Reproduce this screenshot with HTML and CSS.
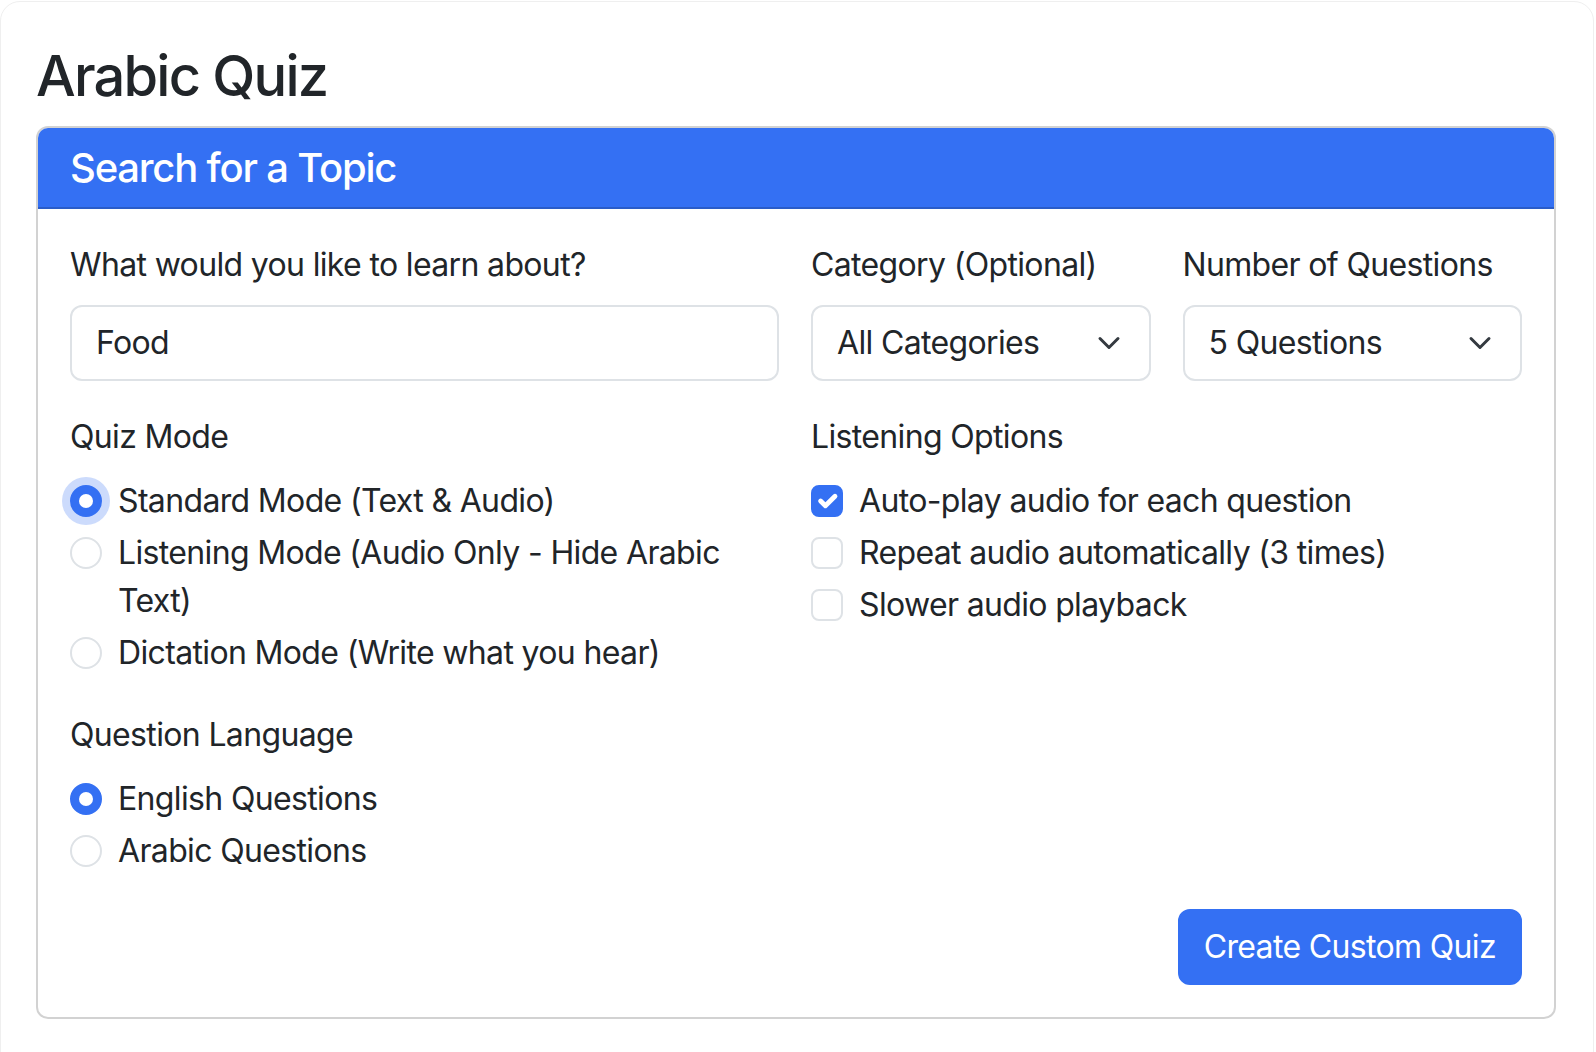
FILE: index.html
```html
<!DOCTYPE html>
<html lang="en">
<head>
<meta charset="utf-8">
<title>Arabic Quiz</title>
<link rel="stylesheet" href="styles.css">
</head>
<body>
<div class="frame">
  <h2 class="title">Arabic Quiz</h2>
  <div class="card">
    <div class="card-header">
      <h5 class="card-title">Search for a Topic</h5>
    </div>
    <div class="card-body">
      <div class="row row-top">
        <div class="field">
          <div class="label">What would you like to learn about?</div>
          <div class="control">Food</div>
        </div>
        <div class="field">
          <div class="label">Category (Optional)</div>
          <div class="control select">
            <span>All Categories</span>
            <svg class="chev" viewBox="0 0 16 16" width="32" height="24"><path d="m2 5 6 6 6-6" fill="none" stroke="#343a40" stroke-width="2" stroke-linecap="round" stroke-linejoin="round"/></svg>
          </div>
        </div>
        <div class="field">
          <div class="label">Number of Questions</div>
          <div class="control select">
            <span>5 Questions</span>
            <svg class="chev" viewBox="0 0 16 16" width="32" height="24"><path d="m2 5 6 6 6-6" fill="none" stroke="#343a40" stroke-width="2" stroke-linecap="round" stroke-linejoin="round"/></svg>
          </div>
        </div>
      </div>

      <div class="row row-half">
        <div class="group">
          <div class="label">Quiz Mode</div>
          <div class="check"><span class="radio checked focus"></span><span class="check-text">Standard Mode (Text &amp; Audio)</span></div>
          <div class="check"><span class="radio"></span><span class="check-text">Listening Mode (Audio Only - Hide Arabic Text)</span></div>
          <div class="check"><span class="radio"></span><span class="check-text">Dictation Mode (Write what you hear)</span></div>
        </div>
        <div class="group">
          <div class="label">Listening Options</div>
          <div class="check"><span class="box checked"><svg viewBox="0 0 20 20" width="32" height="32"><path d="m6 10 3 3 6-6" fill="none" stroke="#fff" stroke-width="3" stroke-linecap="round" stroke-linejoin="round"/></svg></span><span class="check-text">Auto-play audio for each question</span></div>
          <div class="check"><span class="box"></span><span class="check-text">Repeat audio automatically (3 times)</span></div>
          <div class="check"><span class="box"></span><span class="check-text">Slower audio playback</span></div>
        </div>
      </div>

      <div class="row row-half">
        <div class="group">
          <div class="label">Question Language</div>
          <div class="check"><span class="radio checked"></span><span class="check-text">English Questions</span></div>
          <div class="check"><span class="radio"></span><span class="check-text">Arabic Questions</span></div>
        </div>
      </div>

      <div class="actions">
        <button class="btn" type="button">Create Custom Quiz</button>
      </div>
    </div>
  </div>
</div>
</body>
</html>
```
FILE: styles.css
```css
* { box-sizing: border-box; }
html, body { margin: 0; padding: 0; background: #fff; }
body {
  font-family: Inter, "Noto Sans", "Liberation Sans", sans-serif;
  color: #212529;
  font-size: 32px;
  line-height: 48px;
  letter-spacing: -0.65px;
}
.frame {
  margin: 1px 2px 0 0;
  border: 1px solid #efefef;
  border-radius: 20px;
  padding: 40px 37px 0 35px;
  min-height: 1120px;
}
.title {
  margin: 0 0 16px;
  font-size: 56px;
  line-height: 68px;
  font-weight: 500;
  letter-spacing: -1.8px;
}
.card {
  border: 2px solid rgba(0,0,0,.175);
  border-radius: 12px;
  overflow: hidden;
}
.card-header {
  background: #3470f3;
  padding: 16px 32px 15px;
  border-bottom: 2px solid rgba(0,0,0,.175);
}
.card-title {
  margin: 0;
  color: #fff;
  font-size: 40px;
  line-height: 48px;
  font-weight: 500;
  letter-spacing: -1.2px;
}
.card-body { padding: 32px; }
.row { display: grid; column-gap: 32px; margin-bottom: 30px; }
.row-top { grid-template-columns: 709px 1fr 1fr; margin-bottom: 32px; }
.row-half { grid-template-columns: 709px 1fr; }
.label { margin-bottom: 16px; }
.control {
  border: 2px solid #dee2e6;
  border-radius: 12px;
  padding: 12px 24px;
  height: 76px;
  background: #fff;
}
.select {
  display: flex;
  align-items: center;
  justify-content: space-between;
  padding-right: 24px;
}
.chev { display: block; }
.check {
  display: flex;
  align-items: flex-start;
  gap: 16px;
  min-height: 48px;
  margin-bottom: 4px;
}
.radio, .box {
  flex: none;
  width: 32px;
  height: 32px;
  margin-top: 8px;
  border: 2px solid #dee2e6;
  background: #fff;
  display: flex;
  align-items: center;
  justify-content: center;
}
.radio { border-radius: 50%; }
.box { border-radius: 8px; }
.radio.checked { background: #3470f3; border-color: #3470f3; }
.radio.checked::after {
  content: "";
  width: 14px;
  height: 14px;
  border-radius: 50%;
  background: #fff;
}
.radio.focus { box-shadow: 0 0 0 8px rgba(52,112,243,.25); }
.box.checked { background: #3470f3; border-color: #3470f3; }
.box svg { display: block; flex: none; }
.check-text { min-width: 0; }
.actions { display: flex; justify-content: flex-end; }
.btn {
  font-family: inherit;
  font-size: 32px;
  line-height: 48px;
  letter-spacing: -0.65px;
  color: #fff;
  background: #3470f3;
  border: 2px solid #3470f3;
  border-radius: 12px;
  padding: 12px 24px;
  font-weight: 400;
}
```
